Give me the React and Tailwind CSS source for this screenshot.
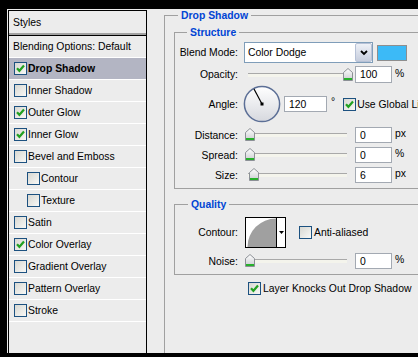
import React from "react";

function Check({ checked }) {
  return (
    <span className="w-[13px] h-[13px] shrink-0 border border-[#1c5180] bg-linear-to-br from-[#d8d8d2] to-[#f8f8f6] flex items-center justify-center">
      {checked && (
        <svg width="9" height="9" viewBox="0 0 9 9">
          <path d="M1 4.2 L3.4 6.8 L8 1.6" stroke="#21a121" strokeWidth="2.2" fill="none" />
        </svg>
      )}
    </span>
  );
}

function Thumb({ className }) {
  return (
    <svg className={"absolute top-[1px] " + className} width="10" height="13" viewBox="0 0 10 13">
      <defs>
        <linearGradient id="tg" x1="0" y1="0" x2="0" y2="1">
          <stop offset="0" stopColor="#ffffff" />
          <stop offset="1" stopColor="#c9cbcf" />
        </linearGradient>
      </defs>
      <path d="M0.5 4.5 L5 0.5 L9.5 4.5 L9.5 12.5 L0.5 12.5 Z" fill="url(#tg)" stroke="#8c9096" strokeWidth="1" />
      <rect x="1" y="10" width="8" height="2" fill="#27b02b" />
    </svg>
  );
}

function Slider({ thumb }) {
  return (
    <div className="relative ml-[6px] w-[108px] h-[16px] shrink-0">
      <div className="absolute left-[4px] w-[99px] top-[6px] h-[4px] border-t border-[#a9a9a9] bg-[#f4f4ec]" />
      <Thumb className={thumb} />
    </div>
  );
}

function NumBox({ value, className }) {
  return (
    <div className={"shrink-0 border border-[#a3a9b2] bg-white flex items-center pl-[4px] " + className}>
      {value}
    </div>
  );
}

function Label({ children }) {
  return <div className="w-[63px] shrink-0 text-right whitespace-nowrap">{children}</div>;
}

function Group({ title, titleClass, className, children }) {
  return (
    <div className={"shrink-0 border-[#a0a0a0] " + className}>
      <div className={"-mt-[7px] w-fit px-[3px] bg-[#ececec] font-bold text-[#0044d4] leading-[13px] " + titleClass}>
        {title}
      </div>
      {children}
    </div>
  );
}

export default function App() {
  const items = [
    { label: "Drop Shadow", checked: true, active: true },
    { label: "Inner Shadow" },
    { label: "Outer Glow", checked: true },
    { label: "Inner Glow", checked: true },
    { label: "Bevel and Emboss" },
    { label: "Contour", indent: true },
    { label: "Texture", indent: true },
    { label: "Satin" },
    { label: "Color Overlay", checked: true },
    { label: "Gradient Overlay" },
    { label: "Pattern Overlay" },
    { label: "Stroke" },
  ];

  return (
    <div className="w-[418px] h-[357px] bg-black pt-[9px] pl-[7px] pb-[4px] font-['Liberation_Sans',Arial,sans-serif] text-[10.4px] leading-[13px] text-black">
      <div className="flex h-full bg-[#ececec] overflow-hidden">
        {/* Left list */}
        <div className="ml-px mt-px w-[139px] shrink-0 border-x border-t border-black flex flex-col">
          <div className="h-[24px] pl-[4px] flex items-center border-b-2 border-[#a2a2a2]">Styles</div>
          <div className="h-px bg-black" />
          <div className="h-[22px] pl-[4px] flex items-center border-b border-white whitespace-nowrap">
            Blending Options: Default
          </div>
          {items.map((it) => (
            <div
              key={it.label}
              className={
                "h-[22px] flex items-center gap-px border-b border-white whitespace-nowrap " +
                (it.indent ? "pl-[18px] " : "pl-[5px] ") +
                (it.active ? "bg-[#b3b5c3] font-bold" : "")
              }
            >
              <Check checked={it.checked} />
              <span>{it.label}</span>
            </div>
          ))}
        </div>

        {/* Right panel */}
        <div className="flex-1 overflow-hidden">
          <Group
            title="Drop Shadow"
            titleClass="ml-[13px]"
            className="ml-[17px] mt-[6px] w-[300px] h-[360px] border-l border-t"
          >
            {/* Structure */}
            <Group
              title="Structure"
              titleClass="ml-[12px]"
              className="ml-[9px] mt-[10px] w-[280px] h-[157px] border-l border-y"
            >
              {/* Blend mode */}
              <div className="mt-[3px] h-[21px] flex items-center">
                <Label>Blend Mode:</Label>
                <div className="ml-[6px] w-[129px] h-[21px] shrink-0 border border-[#7f9db9] bg-white flex items-center">
                  <span className="flex-1 pl-[3px] whitespace-nowrap">Color Dodge</span>
                  <div className="w-[17px] h-[19px] rounded-[2px] border border-[#b6c1d6] bg-linear-to-b from-[#eef1f7] to-[#c6cddd] flex items-center justify-center">
                    <svg width="8" height="6" viewBox="0 0 8 6">
                      <path d="M1 1 L4 4 L7 1" stroke="#000" strokeWidth="1.8" fill="none" />
                    </svg>
                  </div>
                </div>
                <div className="ml-[4px] w-[30px] h-[16px] shrink-0 border border-[#8e8e8e] bg-[#3cbaf7]" />
              </div>

              {/* Opacity */}
              <div className="mt-[3px] h-[17px] flex items-center">
                <Label>Opacity:</Label>
                <Slider thumb="left-[99px]" />
                <NumBox value="100" className="ml-[3px] w-[37px] h-[17px]" />
                <span className="ml-[3px] self-start mt-[1px]">%</span>
              </div>

              {/* Angle */}
              <div className="mt-[2px] h-[38px] flex items-center">
                <Label>Angle:</Label>
                <svg className="ml-[5px] shrink-0" width="38" height="38" viewBox="0 0 38 38">
                  <defs>
                    <linearGradient id="dg" x1="0" y1="0" x2="0" y2="1">
                      <stop offset="0" stopColor="#ffffff" />
                      <stop offset="1" stopColor="#d6d8de" />
                    </linearGradient>
                  </defs>
                  <circle cx="19" cy="19" r="17.6" fill="url(#dg)" stroke="#5c6f96" strokeWidth="1.5" />
                  <line x1="19" y1="19" x2="11" y2="4" stroke="#000" strokeWidth="1.2" />
                  <rect x="17.5" y="17.5" width="3" height="3" fill="#000" />
                </svg>
                <NumBox value="120" className="ml-[3px] w-[43px] h-[16px]" />
                <span className="ml-[4px] self-start mt-[10px]">°</span>
                <div className="ml-[8px] flex items-center gap-px whitespace-nowrap">
                  <Check checked />
                  <span>Use Global Light</span>
                </div>
              </div>

              {/* Distance */}
              <div className="mt-[4px] h-[16px] flex items-center">
                <Label>Distance:</Label>
                <Slider thumb="left-[1px]" />
                <NumBox value="0" className="ml-[3px] w-[37px] h-[16px]" />
                <span className="ml-[3px] self-start">px</span>
              </div>

              {/* Spread */}
              <div className="mt-[4px] h-[16px] flex items-center">
                <Label>Spread:</Label>
                <Slider thumb="left-[1px]" />
                <NumBox value="0" className="ml-[3px] w-[37px] h-[16px]" />
                <span className="ml-[3px] self-start">%</span>
              </div>

              {/* Size */}
              <div className="mt-[4px] h-[16px] flex items-center">
                <Label>Size:</Label>
                <Slider thumb="left-[5px]" />
                <NumBox value="6" className="ml-[3px] w-[37px] h-[16px]" />
                <span className="ml-[3px] self-start">px</span>
              </div>
            </Group>

            {/* Quality */}
            <Group
              title="Quality"
              titleClass="ml-[13px]"
              className="ml-[9px] mt-[15px] w-[280px] h-[71px] border-l border-y"
            >
              <div className="mt-[6px] h-[31px] flex items-center">
                <Label>Contour:</Label>
                <div className="ml-[7px] w-[41px] h-[31px] shrink-0 border border-black bg-white flex">
                  <svg width="30" height="29" viewBox="0 0 30 29" className="shrink-0">
                    <path d="M1.5 29 A28.5 28.5 0 0 1 30 0.5 L30 29 Z" fill="#a0a0a0" />
                  </svg>
                  <div className="w-[9px] border-l border-black flex items-center justify-center">
                    <svg width="5" height="3" viewBox="0 0 5 3">
                      <path d="M0 0 L5 0 L2.5 3 Z" fill="#000" />
                    </svg>
                  </div>
                </div>
                <div className="ml-[13px] flex items-center gap-[2px] whitespace-nowrap">
                  <Check />
                  <span>Anti-aliased</span>
                </div>
              </div>
              <div className="mt-[5px] h-[16px] flex items-center">
                <Label>Noise:</Label>
                <Slider thumb="left-[1px]" />
                <NumBox value="0" className="ml-[3px] w-[37px] h-[16px]" />
                <span className="ml-[3px] self-start">%</span>
              </div>
            </Group>

            <div className="ml-[83px] mt-[7px] flex items-center gap-[2px] whitespace-nowrap">
              <Check checked />
              <span>Layer Knocks Out Drop Shadow</span>
            </div>
          </Group>
        </div>
      </div>
    </div>
  );
}
